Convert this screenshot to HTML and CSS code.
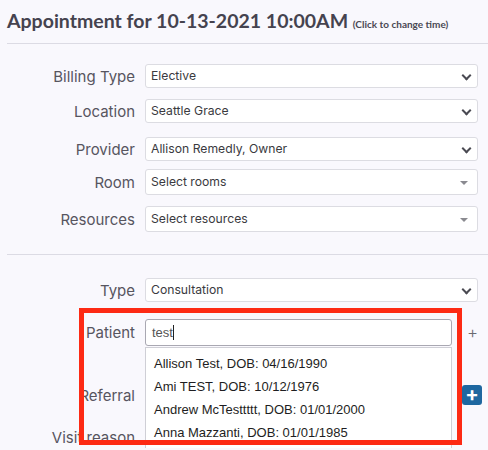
FILE: index.html
```html
<!DOCTYPE html>
<html lang="en">
<head>
    <meta charset="UTF-8">
    <meta name="viewport" content="width=device-width, initial-scale=1.0">
    <title>New Appointment</title>
    <link rel="stylesheet" href="styles.css">
</head>
<body>
    <div class="page">
        <h1 class="title">Appointment for 10-13-2021 10:00AM <small>(Click to change time)</small></h1>
        <div class="divider"></div>

        <div class="form first">
            <div class="row">
                <label>Billing Type</label>
                <div class="select">Elective<span class="chev"></span></div>
            </div>
            <div class="row location">
                <label>Location</label>
                <div class="select">Seattle Grace<span class="chev"></span></div>
            </div>
            <div class="row provider">
                <label>Provider</label>
                <div class="select">Allison Remedly, Owner<span class="chev"></span></div>
            </div>
            <div class="row room">
                <label>Room</label>
                <div class="select multi">Select rooms<span class="caret"></span></div>
            </div>
            <div class="row resources">
                <label>Resources</label>
                <div class="select multi">Select resources<span class="caret"></span></div>
            </div>
        </div>

        <div class="divider"></div>

        <div class="form second">
            <div class="row">
                <label>Type</label>
                <div class="select">Consultation<span class="chev"></span></div>
            </div>
            <div class="row patient">
                <label>Patient</label>
                <div class="search">
                    <div class="input">test<span class="cursor"></span></div>
                    <ul class="results">
                        <li>Allison Test, DOB: 04/16/1990</li>
                        <li>Ami TEST, DOB: 10/12/1976</li>
                        <li>Andrew McTesttttt, DOB: 01/01/2000</li>
                        <li>Anna Mazzanti, DOB: 01/01/1985</li>
                    </ul>
                </div>
                <span class="add">+</span>
            </div>
            <div class="row referral">
                <label>Referral</label>
                <div class="select short"></div>
                <span class="addbtn">+</span>
            </div>
            <div class="row visit">
                <label>Visit reason</label>
                <div class="select short"></div>
            </div>
            <div class="highlight"></div>
        </div>
    </div>
</body>
</html>
```

FILE: styles.css
```css
html, body {
    overflow: hidden;
}

body {
    margin: 0;
    background: #f9f8fd;
    font-family: Inter, "Open Sans", sans-serif;
    color: #45434f;
}

.page {
    padding-left: 7px;
}

.title {
    margin: 0;
    padding-top: 9px;
    height: 34px;
    white-space: nowrap;
    font-family: Lato, Inter, sans-serif;
    font-size: 19.5px;
    font-weight: 700;
    color: #45434f;
}

.title small {
    font-size: 10px;
    font-weight: 700;
    color: #4a4854;
}

.divider {
    height: 1px;
    background: #dcdbe4;
}

.form {
    display: flex;
    flex-direction: column;
}

.form.first {
    padding: 20px 0 22px;
}

.form.second {
    padding-top: 23px;
    position: relative;
    height: 170px;
}

.row {
    display: flex;
    align-items: center;
}

.row.location {
    margin-top: 11px;
}

.row.provider {
    margin-top: 14px;
}

.row.room {
    margin-top: 8px;
}

.row.resources {
    margin-top: 11px;
}

.row label {
    width: 128px;
    margin-right: 10px;
    text-align: right;
    font-size: 15px;
    color: #57555f;
}

.select {
    position: relative;
    box-sizing: border-box;
    width: 333px;
    height: 24px;
    padding: 0 5px;
    background: #fff;
    border: 1px solid #dcdce2;
    border-radius: 3px;
    font-size: 12.2px;
    line-height: 22px;
    color: #3a3a40;
}

.select.multi {
    height: 26px;
    line-height: 24px;
}

.select.short {
    width: 307px;
}

.chev {
    position: absolute;
    right: 7px;
    top: 7px;
    width: 5px;
    height: 5px;
    border-right: 2px solid #4a4a52;
    border-bottom: 2px solid #4a4a52;
    transform: rotate(45deg);
}

.caret {
    position: absolute;
    right: 9px;
    top: 11px;
    border-left: 4px solid transparent;
    border-right: 4px solid transparent;
    border-top: 4px solid #8a8a90;
}

.row.patient {
    margin-top: 17px;
    position: relative;
    z-index: 2;
}

.search {
    position: relative;
    width: 307px;
}

.input {
    box-sizing: border-box;
    height: 27px;
    padding: 0 6px;
    background: #fff;
    border: 1px solid #a9a8b2;
    border-radius: 3px;
    font-family: "Liberation Sans", Arial, sans-serif;
    font-size: 13px;
    line-height: 25px;
    color: #555;
}

.cursor {
    display: inline-block;
    width: 1px;
    height: 15px;
    background: #222;
    vertical-align: -3px;
}

.results {
    position: absolute;
    left: 0;
    right: 0;
    top: 28px;
    margin: 0;
    padding: 4px 0 0;
    list-style: none;
    height: 120px;
    background: #fff;
    border: 1px solid #cfcfd6;
    border-bottom: none;
}

.results li {
    height: 23px;
    padding-left: 8px;
    font-family: "Liberation Sans", Arial, sans-serif;
    font-size: 13px;
    line-height: 23px;
    color: #1e1e22;
}

.add {
    margin-left: 15px;
    font-size: 17px;
    font-weight: 300;
    color: #6a6a70;
    line-height: 1;
}

.row.referral {
    margin-top: 37px;
}

.addbtn {
    margin-left: 10px;
    width: 20px;
    height: 20px;
    border-radius: 3px;
    background: #1e67a0;
    color: #fff;
    font-size: 20px;
    font-weight: 700;
    line-height: 19px;
    text-align: center;
}

.row.visit {
    margin-top: 18px;
}

.highlight {
    position: absolute;
    left: 72px;
    top: 53px;
    width: 373px;
    height: 127px;
    border: 5px solid #fd2a14;
    z-index: 3;
}
```
